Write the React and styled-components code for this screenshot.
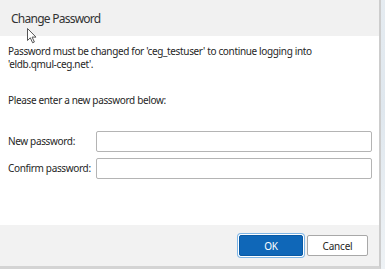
import styled, { createGlobalStyle } from "styled-components";

const Global = createGlobalStyle`
  html, body { margin: 0; padding: 0; }
  body {
    font-family: "Segoe UI", "Noto Sans", sans-serif;
    background: #e8edf1;
  }
`

const Screen = styled.div`
    position: relative;
    width: 385px;
    height: 269px;
    display: flex;
    overflow: hidden;
    background: linear-gradient(160deg, #eef2f5 0%, #dfe7ee 60%, #eef2f5 100%);
`

const Dialog = styled.div`
    width: 379px;
    height: 266px;
    display: flex;
    flex-direction: column;
    border-right: 2px solid #cdcdcd;
    border-bottom: 3px solid #d4d4d4;
    background: #ffffff;
    color: #262626;
`

const Header = styled.div`
    height: 36px;
    box-sizing: border-box;
    padding: 10px 0 0 11px;
    background: #f1f1f1;
    font-size: 12px;
    letter-spacing: -0.75px;
    color: #333;
`

const Body = styled.div`
    flex: 1;
    padding: 9px 8px 0 8px;
    font-size: 10px;
    letter-spacing: -0.35px;
    line-height: 13px;
`

const Message = styled.p`
    margin: 0;
`

const Hint = styled.p`
    margin: 23px 0 0 0;
`

const Fields = styled.div`
    display: grid;
    grid-template-columns: 88px 276px;
    row-gap: 6px;
    align-items: center;
    margin-top: 24px;
`

const Label = styled.label`
    white-space: nowrap;
`

const Input = styled.input`
    box-sizing: border-box;
    height: 21px;
    width: 276px;
    border: 1px solid #b4b4b4;
    border-radius: 2px;
    background: #fff;
    margin: 0;
`

const Footer = styled.div`
    height: 41px;
    box-sizing: border-box;
    background: #f2f2f2;
    display: flex;
    justify-content: flex-end;
    align-items: flex-start;
    gap: 4px;
    padding: 10px 11px 0 0;
`

const Button = styled.button`
    box-sizing: border-box;
    height: 21px;
    width: ${p => p.$w}px;
    font-family: inherit;
    font-size: 10px;
    letter-spacing: -0.2px;
    border-radius: 2px;
    padding: 0;
    color: ${p => p.$primary ? "#fff" : "#262626"};
    background: ${p => p.$primary ? "#0f67b8" : "#fff"};
    border: 1px solid ${p => p.$primary ? "#0a5aa4" : "#a8a8a8"};
    box-shadow: ${p => p.$primary ? "0 0 0 1px #fff, 0 0 0 2px #7fb6e6" : "none"};
`

const Cursor = styled.svg`
    position: absolute;
    left: 27px;
    top: 28px;
    pointer-events: none;
`

const App = () => {
    return (
        <Screen>
            <Global />
            <Dialog>
                <Header>Change Password</Header>
                <Body>
                    <Message>
                        Password must be changed for 'ceg_testuser' to continue logging into
                        <br />'eldb.qmul-ceg.net'.
                    </Message>
                    <Hint>Please enter a new password below:</Hint>
                    <Fields>
                        <Label>New password:</Label>
                        <Input type="password" />
                        <Label>Confirm password:</Label>
                        <Input type="password" />
                    </Fields>
                </Body>
                <Footer>
                    <Button $primary $w={64}>OK</Button>
                    <Button $w={61}>Cancel</Button>
                </Footer>
            </Dialog>
            <Cursor width="11" height="16" viewBox="0 0 11 16">
                <path d="M0.5 0.5 L0.5 12.5 L3.3 9.8 L5.6 14.8 L7.4 14 L5.1 9.1 L9 9.1 Z"
                    fill="#fff" stroke="#555" strokeWidth="1" strokeLinejoin="round" />
            </Cursor>
        </Screen>
    )
}

export default App
